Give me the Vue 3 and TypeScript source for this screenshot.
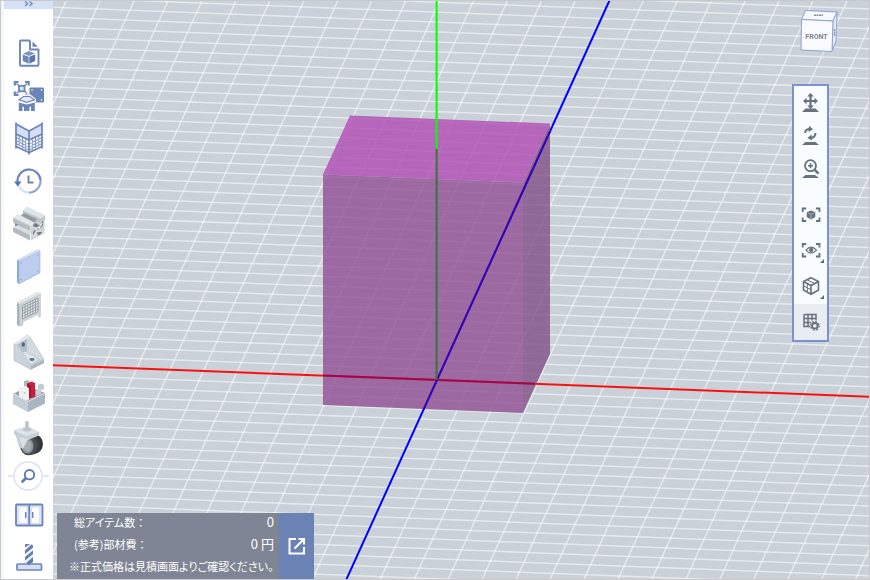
<script setup lang="ts">
interface Line {
  x1: number
  y1: number
  x2: number
  y2: number
}

// Projected floor grid: one step along each floor axis, in scene units
const origin = { x: 437, y: 380 }
const stepX = { x: 33.36, y: 1.29 }
const stepZ = { x: -4.44, y: 9.77 }

const at = (i: number, k: number) => ({
  x: origin.x + i * stepX.x + k * stepZ.x,
  y: origin.y + i * stepX.y + k * stepZ.y,
})

const reach = 90
const gridLines: Line[] = []
for (let n = -reach; n <= reach; n++) {
  const a = at(n, -reach)
  const b = at(n, reach)
  const c = at(-reach, n)
  const d = at(reach, n)
  gridLines.push({ x1: a.x, y1: a.y, x2: b.x, y2: b.y })
  gridLines.push({ x1: c.x, y1: c.y, x2: d.x, y2: d.y })
}

const totals = [
  { label: '総アイテム数', value: '0' },
  { label: '(参考)部材費', value: '0 円' },
]
</script>

<template>
  <div class="app">
    <nav class="sidebar" aria-label="Parts">
      <button class="expand" aria-label="Expand">
        <svg width="10" height="6" viewBox="0 0 10 6"><path d="M1 .5 3.700 2.500 1 5M5.500 .5 8.200 2.500 5.500 5" fill="none" stroke="#6f86ba" stroke-width="1.300" /></svg>
      </button>

      <button class="tool" aria-label="New document">
        <svg width="35" height="43" viewBox="0 0 35 43">
          <path d="M19 9.500H10q-1 0-1 1V33.700q0 1 1 1H26.500q1 0 1-1V19L19 19Z" fill="#fff" />
          <path d="M19 9.500H10q-1 0-1 1V33.700q0 1 1 1H26.500q1 0 1-1V18.500H19V9.500" fill="none" stroke="#6c85b9" stroke-width="1.900" stroke-linejoin="round" />
          <path d="M21.500 10.500v5.300h5.300Z" fill="#6c85b9" />
          <path d="M18 20l6 2.500-6 2.500-6-2.500Z" fill="#7d94c2" />
          <path d="M11.800 23.400l5.900 2.400v7l-5.900-2.800Z" fill="#6c85b9" />
          <path d="M24.200 23.400l-5.900 2.400v7l5.900-2.800Z" fill="#5b76ad" />
        </svg>
      </button>

      <button class="tool" aria-label="Templates">
        <svg width="35" height="43" viewBox="0 0 35 43">
          <path d="M3.800 11.500V8h3.700M14 8h3.700v3.500M3.800 17.500V21h3.700M14 21h3.700" fill="none" stroke="#6c85b9" stroke-width="2.200" />
          <rect x="8" y="11.800" width="5.500" height="5.500" fill="#dce6f6" stroke="#6c85b9" stroke-width="1.800" />
          <path d="M5.500 9.500l2.500 2.500M16 9.500l-2.500 2.500M5.500 19.500l2.500-2.500M16 19.500l-2.500-2.500" stroke="#6c85b9" stroke-width="1.200" />
          <rect x="18.500" y="13.500" width="14.500" height="15" rx="1" fill="#6c85b9" />
          <g fill="#fff"><circle cx="21" cy="16" r=".8" /><circle cx="30.500" cy="16" r=".8" /><circle cx="30.500" cy="26" r=".8" /></g>
          <path d="M7.500 25.500l5-4h6.500l5 4v3h-16.500Z" fill="#fff" stroke="#fff" stroke-width="2" />
          <path d="M8 25.800l4.500-3.300h6.500l4.500 3.300-7.700 2.500Z" fill="#e4ebf7" stroke="#6c85b9" stroke-width="1.200" />
          <path d="M7.800 28.500l8 2 8-2v8.500h-3.800v-4.500l-1.500.5v4h-5.500v-4l-1.500-.5v4.500h-3.700Z" fill="#6c85b9" />
        </svg>
      </button>

      <button class="tool" aria-label="Enclosure">
        <svg width="35" height="43" viewBox="0 0 35 43">
          <path d="M5 7l13 7v8.500L5 17ZM31 7l-13 7v8.500L31 17Z" fill="#d5dff3" />
          <path d="M5 20.500l13 6.500 13-6.500M5 23.500l13 6.500 13-6.500M5 26.500l13 6.500 13-6.500M8.200 18v11.500M11.500 20v11.500M14.700 21.500v12M21.300 21.500v12M24.500 20v11.500M27.800 18v11.500" fill="none" stroke="#8398c5" stroke-width="1.100" />
          <path d="M5 5.500v26M31 5.500v26M18 13.500v24M5 7l13 7 13-7M5 17l13 6 13-6M5 29.500l13 6 13-6" fill="none" stroke="#6c85b9" stroke-width="1.700" />
        </svg>
      </button>

      <button class="tool" aria-label="History">
        <svg width="35" height="43" viewBox="0 0 35 43">
          <circle cx="18" cy="21" r="11.500" fill="none" stroke="#dbe4f5" stroke-width="2.400" />
          <path d="M6.500 22a11.500 11.500 0 0 1 23-2" fill="none" stroke="#6c85b9" stroke-width="2" />
          <path d="M29.500 20a11.500 11.500 0 0 1-11.500 12.500" fill="none" stroke="#8fa3cd" stroke-width="1.800" />
          <path d="M3 21.500h7.500l-3.700 5Z" fill="#5873ac" />
          <path d="M17.500 15.500v7h5" fill="none" stroke="#6c85b9" stroke-width="1.900" />
        </svg>
      </button>

      <button class="tool" aria-label="Aluminium frames">
        <svg width="35" height="43" viewBox="0 0 35 43">
          <path d="M12 7.500l4-3.500 18 8.500v5l-6 3.500-16-8Z" fill="#bfc6cb" />
          <path d="M12 7.500l4-3.500 18 8.500-4.500 3Z" fill="#dfe4e7" />
          <path d="M8 14l14 8 4-6-13-6Z" fill="#949ba2" />
          <path d="M2 14.500l5-3.500 17 9-4.500 3Z" fill="#e3e8ea" />
          <path d="M2 14.500l17.500 8.500v5L2 19.500Z" fill="#b7bfc5" />
          <path d="M4 20l15 7.500v4L4 25Z" fill="#7f868e" />
          <path d="M2 24l5-2 15 7-3.500 3Z" fill="#d9dfe2" />
          <path d="M2 24l17 8v5.500L2 29Z" fill="#b3bbc1" />
          <path d="M20 23l13.500-7v14L20 37.500Z" fill="#cbd1d5" />
          <path d="M24 19.500l4 3 4-5v5l-3 3 3 3-4 4-3-3-3 5v-5l2-3-2-4Z" fill="#737b85" />
          <path d="M22 24l10 5M31 20l-9 14" stroke="#dce1e4" stroke-width="1.800" />
          <circle cx="27" cy="26.500" r="2.300" fill="#b9c0c6" stroke="#eef1f3" />
        </svg>
      </button>

      <button class="tool" aria-label="Panels">
        <svg width="35" height="43" viewBox="0 0 35 43">
          <path d="M6 14l21-10.500 2 1.500v22L8 38l-2-1.500Z" fill="#8fa8d2" />
          <path d="M8 15L29 5v21.500L8 37.500Z" fill="#bccdf0" stroke="#a4b9df" stroke-width=".7" />
          <path d="M6 14l21-10.500 2 1.500L8 15Z" fill="#d5e0f6" />
          <g fill="#8399c4"><circle cx="10" cy="17" r=".7" /><circle cx="27" cy="9" r=".7" /><circle cx="10" cy="33.500" r=".7" /><circle cx="27" cy="25" r=".7" /></g>
        </svg>
      </button>

      <button class="tool" aria-label="Mesh panels">
        <svg width="35" height="43" viewBox="0 0 35 43">
          <path d="M6 13.500L26.500 3l3 1.500v23l-2.500 1v-3L12 33v3l-3 1.500-3-1.500Z" fill="#aab3ba" />
          <path d="M8.500 15l21-10.500v23l-2.500 1v-3L11.500 33v3l-3 1.500Z" fill="#cdd4d9" />
          <path d="M6 13.500L26.500 3l3 1.500L8.500 15Z" fill="#e4e9ec" />
          <path d="M11.500 16.500l15.500-7.500v13.500l-15.500 7.500Z" fill="#e9ecee" />
          <path d="M11.500 19.200l15.500-7.500M11.500 21.900l15.500-7.500M11.500 24.600l15.500-7.500M11.500 27.300l15.500-7.500M11.500 30l15.500-7.500M11.500 16.500l15.500-7.500M11.500 16.500v13.500M14.100 15.200v13.500M16.700 14v13.500M19.300 12.700v13.500M21.900 11.500v13.500M24.500 10.200v13.500M27 9v13.500" stroke="#8d969f" stroke-width=".9" />
        </svg>
      </button>

      <button class="tool" aria-label="Brackets">
        <svg width="35" height="43" viewBox="0 0 35 43">
          <path d="M3 12L15.500 3 19 5 33 27.500V31L20 37.500 3 28.500Z" fill="#c6cfd6" />
          <path d="M5.500 12L16 4.500V22L9.500 25Z" fill="#b3bec7" />
          <path d="M9 20.500l7-1 12 7-9 6Z" fill="#dde3e8" />
          <path d="M15.500 3L19 5 33 27.500l-3 1L16 20Z" fill="#d3dae0" stroke="#b5bfc8" stroke-width=".6" />
          <path d="M3 12l3-.5L20 34v3.500L3 28.500Z" fill="#ccd4db" stroke="#b0bac3" stroke-width=".6" />
          <path d="M20 34l13-6.500V31L20 37.500Z" fill="#abb6c0" />
          <path d="M3 12L15.500 3l3.500 2L6 12.500Z" fill="#e2e8ec" />
          <ellipse cx="12.300" cy="12.500" rx="1.600" ry="2.200" fill="#59636f" />
          <ellipse cx="21" cy="27.500" rx="2.600" ry="1.400" fill="#65707b" />
        </svg>
      </button>

      <button class="tool" aria-label="Accessories">
        <svg width="35" height="43" viewBox="0 0 35 43">
          <path d="M2 19l15-8 17 7-17 9Z" fill="#9ba4ad" />
          <path d="M13 6l4-1 2 2v13h-6Z" fill="#aeb8c1" />
          <circle cx="30" cy="12" r="3.200" fill="#c3cad0" />
          <path d="M25 16l5-4v7l-5 2Z" fill="#c9d0d6" />
          <path d="M16 8.500l4.500-2 3.500 1.500v14l-8 2Z" fill="#c9213f" />
          <path d="M16 8.500l4 1.500V23h-4Z" fill="#a91531" />
          <path d="M8 12.500l7-1.500 3 2.500v11l-5 1-5-2Z" fill="#f1f1f2" />
          <circle cx="13.500" cy="18" r=".8" fill="#a8adb3" />
          <path d="M2 18.500l15 8V37L2 29Z" fill="#c4cdd6" />
          <path d="M34 18l-17 8.500V37l17-8.500Z" fill="#aab5c1" />
          <path d="M2 18.500l15 8 17-8.500" fill="none" stroke="#e0e6eb" />
        </svg>
      </button>

      <button class="tool" aria-label="Casters">
        <svg width="35" height="43" viewBox="0 0 35 43">
          <ellipse cx="23" cy="26" rx="9" ry="10" fill="#323439" />
          <ellipse cx="20" cy="27" rx="9" ry="10" fill="#3d3f44" />
          <ellipse cx="17.500" cy="27.500" rx="8.500" ry="9.800" fill="#4b4e53" />
          <ellipse cx="16.500" cy="28" rx="6" ry="7.500" fill="#8e959c" />
          <ellipse cx="16.500" cy="28" rx="4" ry="5.500" fill="#a7adb3" />
          <path d="M3 12l12 5.500 13-4v4l-11 4.500-5 9-4-2-3-11-2-2Z" fill="#c7d0d8" />
          <path d="M8 19l8 2-4 9Z" fill="#dce3e8" />
          <path d="M3 12l13-4 12 5.500-13 4.500Z" fill="#dde4e9" />
          <ellipse cx="16" cy="11.500" rx="4.500" ry="2" fill="#bcc6ce" />
          <path d="M14.300 3.500q1.700-1 3.400 0v8h-3.400Z" fill="#b9c2ca" />
        </svg>
      </button>

      <button class="tool tool-search" aria-label="Search">
        <svg width="43" height="34" viewBox="0 0 43 34">
          <path d="M1 15h5M36 15h6" stroke="#d8e1f2" stroke-width="1.300" />
          <circle cx="21" cy="15" r="14" fill="#fff" stroke="#dbe4f5" stroke-width="1.500" />
          <circle cx="22.500" cy="13.700" r="4.700" fill="none" stroke="#6079ad" stroke-width="1.900" />
          <path d="M18.500 17.500l-3 3" stroke="#6079ad" stroke-width="2.700" stroke-linecap="round" />
        </svg>
      </button>

      <button class="tool tool-cabinet" aria-label="Doors">
        <svg width="35" height="40" viewBox="0 0 35 40">
          <rect x="5" y="9.500" width="26.500" height="21" rx="1" fill="#dbe4f5" stroke="#6c85b9" stroke-width="1.800" />
          <path d="M8.500 12.500h7v15h-7ZM21 12.500h7v15h-7Z" fill="#fff" />
          <path d="M18.200 9.500v21" stroke="#6c85b9" stroke-width="1.800" />
          <path d="M14.700 17v6M21.700 17v6" stroke="#6c85b9" stroke-width="1.500" />
        </svg>
      </button>

      <button class="tool tool-drill" aria-label="Machining">
        <svg width="35" height="44" viewBox="0 0 35 44">
          <rect x="6" y="29" width="24.500" height="6" rx=".8" fill="#d5dff3" stroke="#6c85b9" stroke-width="1.700" />
          <path d="M14 9h8v18l-4 3.500-4-3.500Z" fill="#edf2fb" />
          <path d="M14 12.500V10q0-1 1-1h4ZM14 19v-3.500L20.500 9.500q1.500 0 1.500 2v1ZM14 25.500V22l8-6.500V19ZM22 22v5l-4 3.500-3-2.500Z" fill="#637cb0" />
        </svg>
      </button>
    </nav>

    <main class="stage">
      <svg class="scene" viewBox="53 1 816 578" preserveAspectRatio="xMidYMid slice" role="img" aria-label="3D view">
        <g stroke="#fff" stroke-opacity=".54" stroke-width="1.500">
          <line v-for="(l, i) in gridLines" :key="i" :x1="l.x1" :y1="l.y1" :x2="l.x2" :y2="l.y2" />
        </g>
        <g stroke-width="2">
          <path d="M-463 345.200 1337 414.800" stroke="#fa0f0f" />
          <path d="M846 -520 28 1280" stroke="#00f" />
        </g>
        <g fill-opacity=".8">
          <path d="M350 115.500 550 123.500 523 182.500 323 174.500Z" fill="#b04bb3" />
          <path d="M323 174.500 523 182.500V413L323 405Z" fill="#905094" />
          <path d="M523 182.500 550 123.500V354L523 413Z" fill="#805087" />
        </g>
        <g fill="none" stroke-width="2">
          <path d="M323 375.600 535 383.800" stroke="#a80445" />
          <path d="M550 131.300 423.500 409.700" stroke="#3300b5" />
          <path d="M436.600 149V380" stroke="#38743a" />
          <path d="M436.600 -500V149" stroke="#0f0" />
        </g>
      </svg>

      <button class="cube" aria-label="View cube">
        <svg width="40" height="46" viewBox="799 8 40 46">
          <path d="M805.500 10.500 837 12 833 21 801.500 19.500Z" fill="#f7faff" stroke="#8ba1da" />
          <path d="M833 21 837 12 836 41 832 51Z" fill="#e9eff9" stroke="#8ba1da" />
          <path d="M801.500 19.500 833 21 832 51.500 801 50Z" fill="#f9fbff" stroke="#8ba1da" />
          <path d="M814 15.200h9" stroke="#8b8f99" stroke-width="1.500" stroke-dasharray="2 .5" />
          <path d="M834.500 29v7" stroke="#8e93a1" stroke-width="1.300" stroke-dasharray="2 .5" />
          <text x="816.500" y="39" text-anchor="middle">FRONT</text>
        </svg>
      </button>

      <div class="view-tools" role="toolbar" aria-label="View">
        <div class="group">
          <button aria-label="Pan">
            <svg width="22" height="22" viewBox="0 0 22 22">
              <path d="M10.500 3v12M4.500 9h12" stroke="#68717d" stroke-width="2.200" />
              <path d="M10.500 1l3.300 3.500H7.200ZM10.500 17l3.300-3.500H7.200ZM3 9l3.500-3.300v6.600ZM18 9l-3.500-3.300v6.600Z" fill="#68717d" />
              <path d="M5.500 16.500h10l3.500 3.500h-17Z" fill="#68717d" />
            </svg>
          </button>
          <button aria-label="Rotate">
            <svg width="22" height="22" viewBox="0 0 22 22">
              <path d="M5 8q.5-4 5-4M15.500 8q0 4.500-5 5" fill="none" stroke="#68717d" stroke-width="2" />
              <path d="M9 .8l4 3.400-4.500 2.800ZM11.500 9.500l-4 3.500 4.500 2.500Z" fill="#68717d" />
              <path d="M5.500 17h10l3.500 3h-17Z" fill="#68717d" />
            </svg>
          </button>
          <button aria-label="Zoom">
            <svg width="22" height="22" viewBox="0 0 22 22">
              <circle cx="10.500" cy="7.700" r="5.500" fill="none" stroke="#68717d" stroke-width="1.800" />
              <path d="M14.500 11.700l4 4" stroke="#68717d" stroke-width="2.400" />
              <path d="M8 7.700h5M10.500 5.200v5" stroke="#68717d" stroke-width="1.600" />
              <path d="M5.500 17h9.500l4 3h-17Z" fill="#68717d" />
            </svg>
          </button>
        </div>
        <div class="group group-tall">
          <button aria-label="Fit">
            <svg width="22" height="22" viewBox="0 0 22 22">
              <path d="M2.700 9V5.500h3.500M16 5.500h3.500v3.500M2.700 14.500v3.500h3.500M16 18h3.500v-3.500" fill="none" stroke="#68717d" stroke-width="1.800" />
              <path d="M11 7.500l4.300 1.800v4.700L11 16.500 6.700 14V9.300Z" fill="#68717d" />
              <path d="M7.500 9.700l3.500 1.700 3.500-1.700M11 11.500v4.500" fill="none" stroke="#bfc5cd" stroke-width=".7" />
            </svg>
          </button>
          <button aria-label="Visibility" class="has-menu">
            <svg width="22" height="22" viewBox="0 0 22 22">
              <path d="M2.700 8.500V5h3.500M16 5h3.500v3.500M2.700 14v3.500h3.500M16 17.500h3.500V14" fill="none" stroke="#68717d" stroke-width="1.800" />
              <path d="M6 11.200q5-6 10.500 0-5.500 6-10.500 0Z" fill="#fff" stroke="#68717d" stroke-width="1.200" />
              <circle cx="11.200" cy="11" r="2.200" fill="#68717d" />
            </svg>
          </button>
          <button aria-label="Display style" class="has-menu">
            <svg width="22" height="22" viewBox="0 0 22 22">
              <path d="M11 2.700l7.500 3.800v8.500L11 19.300 3.500 15V6.500ZM3.500 6.500l7.500 4 7.500-4M11 10.500v8.500" fill="none" stroke="#68717d" stroke-width="1.600" />
              <path d="M3.500 10.800l7.500 4M7.300 8.500v8.500M7.300 5l7.500 3.500" stroke="#68717d" />
            </svg>
          </button>
          <button aria-label="Grid settings" class="active">
            <svg width="22" height="22" viewBox="0 0 22 22">
              <path d="M4 3.500h12v6M4 3.500v12h6M4 7.500h12M4 11.500h7M8 3.500v12M12 3.500v6" fill="none" stroke="#68717d" stroke-width="1.500" />
              <circle cx="14.800" cy="14.800" r="2.800" fill="none" stroke="#68717d" stroke-width="1.800" />
              <circle cx="14.800" cy="14.800" r="4.200" fill="none" stroke="#68717d" stroke-width="1.500" stroke-dasharray="1.650 1.650" />
            </svg>
          </button>
        </div>
      </div>

      <section class="summary">
        <div class="details">
          <dl>
            <div v-for="t in totals" :key="t.label" class="row">
              <dt>{{ t.label }}<span class="colon">：</span></dt>
              <dd>{{ t.value }}</dd>
            </div>
          </dl>
          <p>※正式価格は見積画面よりご確認ください。</p>
        </div>
        <button class="open" aria-label="見積画面">
          <svg width="20" height="20" viewBox="0 0 20 20" fill="none" stroke="#fff" stroke-width="2">
            <path d="M9 3H2.500v14.500H17V11" />
            <path d="M7.500 12.500L16 4M11.500 3H17v5.500" />
          </svg>
        </button>
      </section>
    </main>
  </div>
</template>

<style>
body {
  margin: 0;
}
</style>

<style scoped>
.app {
  box-sizing: border-box;
  display: grid;
  grid-template-columns: 52px 1fr;
  min-height: 100vh;
  border: 1px solid #c8c9cb;
  font-family: "Noto Sans CJK JP", sans-serif;
}

button {
  padding: 0;
  border: 0;
  background: none;
  cursor: pointer;
}

svg {
  display: block;
}

.sidebar {
  display: flex;
  flex-direction: column;
  box-sizing: border-box;
  padding-left: 3px;
  background: linear-gradient(to right, #f3f6fb 3px, #fff 3px);
}

.expand {
  display: flex;
  justify-content: center;
  height: 8px;
  margin-bottom: 22px;
  background: #d6e1f5;
}

.tool {
  display: flex;
  justify-content: center;
  height: 43px;
}

.tool-search {
  height: 34px;
}

.tool-cabinet {
  height: 40px;
}

.tool-drill {
  height: 44px;
}

.stage {
  position: relative;
  overflow: hidden;
  background: #cad1d8;
}

.scene {
  position: absolute;
  inset: 0;
  width: 100%;
  height: 100%;
}

.cube {
  position: absolute;
  top: 7px;
  right: 30px;
}

.cube text {
  font: bold 7px Roboto, sans-serif;
  fill: #7e8592;
}

.view-tools {
  position: absolute;
  top: 83px;
  right: 40px;
  display: flex;
  flex-direction: column;
  gap: 11px;
  border: 2px solid #7b92d0;
  background: #f8fbff;
}

.group {
  display: grid;
  grid-auto-rows: 33px;
}

.group-tall {
  grid-auto-rows: 36px;
}

.group button {
  position: relative;
  display: flex;
  align-items: center;
  justify-content: center;
  width: 33px;
}

.group .active {
  background: #e9edf2;
}

.has-menu::after {
  content: "";
  position: absolute;
  right: 3px;
  bottom: 5px;
  border-left: 4px solid transparent;
  border-bottom: 4px solid #5f6873;
}

.summary {
  position: absolute;
  left: 4px;
  bottom: 0;
  display: flex;
  color: #fff;
}

.details {
  box-sizing: border-box;
  width: 222px;
  padding: 0 5px 2px 12px;
  background: #7f8594;
  font-size: 11px;
  line-height: 22px;
  font-feature-settings: "palt";
  white-space: nowrap;
}

dl,
dd,
p {
  margin: 0;
}

dl {
  margin-top: -2px;
}

.row {
  display: flex;
  justify-content: space-between;
  padding-left: 5px;
}

.colon {
  font-feature-settings: normal;
}

dd {
  font-size: 13px;
}

.open {
  display: flex;
  align-items: center;
  justify-content: center;
  width: 35px;
  background: #6a82b4;
}
</style>
